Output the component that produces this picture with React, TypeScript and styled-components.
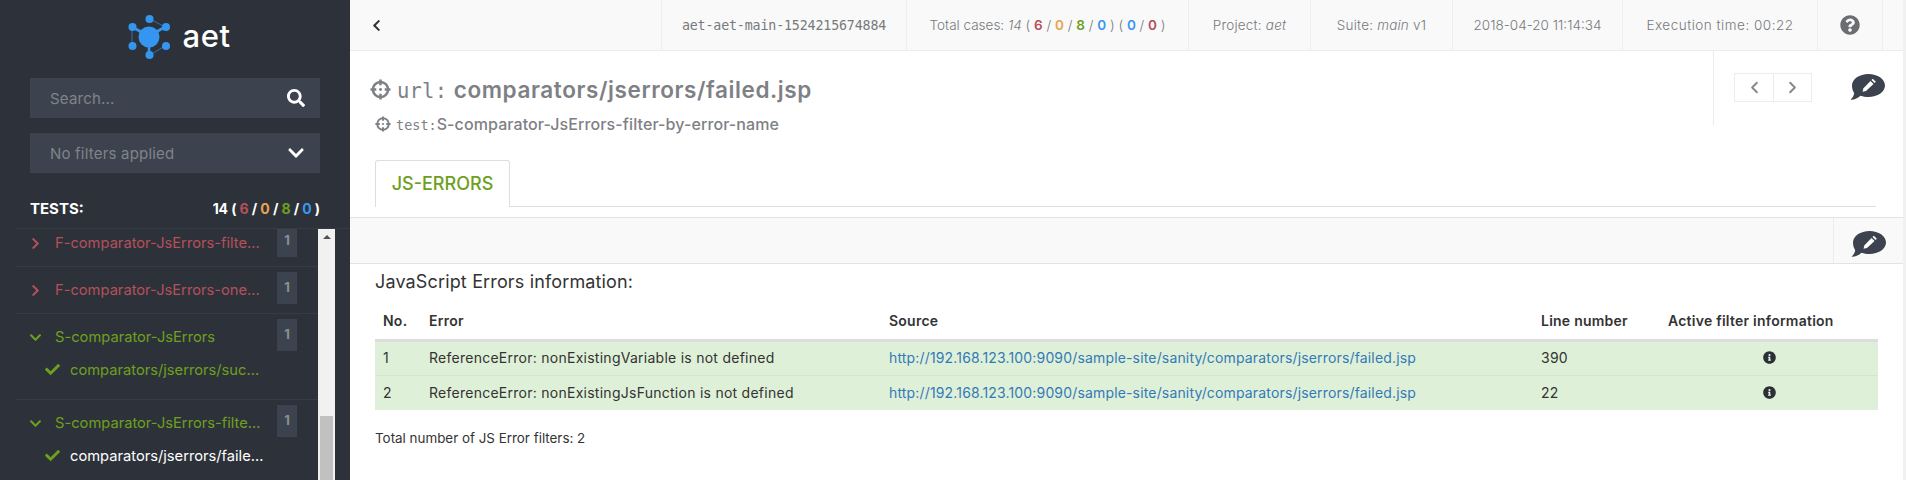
import { FC } from "react";
import styled, { createGlobalStyle } from "styled-components";
import { FaCheck, FaChevronDown, FaChevronLeft, FaChevronRight, FaInfoCircle, FaQuestionCircle, FaSearch } from "react-icons/fa";
import { ChevronLeft, ChevronRight } from "lucide-react";

const RED = "#b5505a";
const ORANGE = "#e8a34f";
const GREEN = "#6da01e";
const BLUE = "#3a97f0";
const SANS = '"Inter", "Open Sans", sans-serif';
const MONO = '"DejaVu Sans Mono", monospace';

const GlobalStyle = createGlobalStyle`
  html, body {
    margin: 0;
    height: 480px;
    overflow: hidden;
    background: #fff;
    font-family: ${SANS};
  }
  * { box-sizing: border-box; }
`;

const Page = styled.div`
  display: flex;
  width: 1906px;
  height: 480px;
  overflow: hidden;
`;

const Sidebar = styled.aside`
  width: 350px;
  flex: none;
  height: 480px;
  background: #2d323a;
  display: flex;
  flex-direction: column;
`;

const Brand = styled.div`
  height: 78px;
  display: flex;
  justify-content: center;
  align-items: flex-start;
  padding: 13px 0 0 8px;
  gap: 11px;
  color: #fff;
  font-size: 31px;
  line-height: 50px;
`;

const BrandName = styled.span`
  font-weight: 500;
  letter-spacing: 0.5px;
  margin-top: -2px;
`;

const Field = styled.div`
  margin: 0 30px 15px;
  height: 40px;
  background: #3d434e;
  display: flex;
  align-items: center;
  justify-content: space-between;
  padding: 0 15px 0 20px;
  color: #7f838a;
  font-size: 15px;
  letter-spacing: 0.2px;
  & svg {
    color: #fff;
    font-size: 18px;
  }
`;

const TestsHead = styled.div`
  margin: 8px 30px 0;
  height: 32px;
  padding-bottom: 8px;
  display: flex;
  align-items: center;
  justify-content: space-between;
  color: #fff;
  font-size: 15px;
  font-weight: 700;
`;

const TestsCount = styled.span`
  font-size: 14px;
  letter-spacing: -0.1px;
`;

const Count = styled.span<{ $color?: string }>`
  color: ${({ $color }) => $color || "inherit"};
`;

const ListArea = styled.div`
  flex: 1;
  min-height: 0;
  margin-left: 15px;
  display: flex;
  border-top: 1px solid #363c45;
  overflow: hidden;
`;

const List = styled.div`
  width: 303px;
  overflow: hidden;
`;

const ListInner = styled.div`
  margin-top: -9px;
`;

const Suite = styled.div`
  border-bottom: 1px solid #363c45;
  padding: 5px 0 0 0;
  min-height: 47px;
`;

const SuiteRow = styled.div<{ $color: string }>`
  display: flex;
  align-items: flex-start;
  color: ${({ $color }) => $color};
  font-size: 14.7px;
`;

const SuiteIcon = styled.span`
  width: 40px;
  padding: 12px 0 0 14px;
  flex: none;
  font-size: 13px;
  line-height: 1;
`;

const SuiteName = styled.span`
  width: 207px;
  line-height: 36px;
  white-space: nowrap;
  overflow: hidden;
  text-overflow: ellipsis;
  flex: none;
`;

const Badge = styled.span`
  margin-left: 15px;
  width: 20px;
  height: 32px;
  flex: none;
  background: #3d434e;
  color: #8b9097;
  font-size: 13px;
  font-weight: 700;
  text-align: center;
  line-height: 31px;
`;

const UrlRow = styled.div<{ $active?: boolean }>`
  display: flex;
  align-items: center;
  height: 30px;
  margin-bottom: 14px;
  color: ${({ $active }) => ($active ? "#fff" : GREEN)};
  font-size: 14.7px;
`;

const UrlIcon = styled.span`
  width: 55px;
  padding-left: 30px;
  flex: none;
  color: ${GREEN};
  font-size: 15px;
  line-height: 1;
`;

const UrlName = styled.span<{ $width: number }>`
  width: ${({ $width }) => $width}px;
  white-space: nowrap;
  overflow: hidden;
  text-overflow: ellipsis;
`;

const ScrollTrack = styled.div`
  width: 17px;
  flex: none;
  background: #f1f1f1;
  display: flex;
  flex-direction: column;
  justify-content: space-between;
  align-items: center;
`;

const ScrollUp = styled.div`
  width: 0;
  height: 0;
  margin-top: 6px;
  border-left: 4px solid transparent;
  border-right: 4px solid transparent;
  border-bottom: 4px solid #505050;
`;

const ScrollThumb = styled.div`
  width: 13px;
  height: 64px;
  background: #c1c1c1;
`;

const Main = styled.main`
  flex: 1;
  min-width: 0;
  height: 480px;
  border-right: 3px solid #f1f1f1;
`;

const Toolbar = styled.header`
  height: 51px;
  display: flex;
  background: #f9f9f9;
  border-bottom: 1px solid #ececec;
  color: #77797d;
  font-size: 13.5px;
  font-weight: 300;
`;

const BackCell = styled.div`
  flex: 1;
  display: flex;
  align-items: center;
  padding-left: 20px;
  color: #333;
  font-size: 13px;
`;

const ToolCell = styled.div<{ $width: number; $spacing?: number }>`
  width: ${({ $width }) => $width}px;
  flex: none;
  border-left: 1px solid #efefef;
  display: flex;
  align-items: center;
  justify-content: center;
  white-space: pre;
  letter-spacing: ${({ $spacing }) => $spacing || 0}px;
`;

const MonoText = styled.span`
  font-family: ${MONO};
  font-size: 13.3px;
  letter-spacing: -0.15px;
`;

const StatNum = styled.span<{ $color: string }>`
  color: ${({ $color }) => $color};
  font-weight: 600;
`;

const HelpIcon = styled(FaQuestionCircle)`
  color: #6b6d70;
  font-size: 20px;
`;

const TitleArea = styled.section`
  height: 114px;
  display: flex;
  justify-content: space-between;
`;

const Titles = styled.div`
  padding: 21px 0 0 20px;
`;

const UrlTitle = styled.h1`
  margin: 0;
  display: flex;
  align-items: center;
  height: 34px;
  gap: 6px;
  color: #7e8085;
  font-size: 22.5px;
  font-weight: 600;
  letter-spacing: 0.6px;
  white-space: pre;
`;

const TitleMono = styled.span`
  display: inline-block;
  margin-right: -6px;
  font-family: ${MONO};
  font-weight: 400;
  font-size: 20.5px;
  letter-spacing: 0.2px;
`;

const TestTitle = styled.div`
  display: flex;
  align-items: center;
  height: 26px;
  margin-top: 5px;
  padding-left: 5px;
  gap: 5px;
  color: #7e8085;
  font-size: 16px;
  font-weight: 500;
  letter-spacing: 0.1px;
  white-space: pre;
`;

const TestMono = styled.span`
  font-family: ${MONO};
  font-weight: 400;
  font-size: 13.5px;
  letter-spacing: 0;
`;

const TitleSide = styled.div`
  width: 190px;
  height: 74px;
  border-left: 1px solid #ececec;
  display: flex;
  align-items: flex-start;
  padding: 22px 0 0 20px;
`;

const NavGroup = styled.div`
  display: flex;
  border: 1px solid #ececec;
  height: 29px;
`;

const NavButton = styled.div`
  width: 38px;
  display: flex;
  align-items: center;
  justify-content: center;
  color: #85878b;
  & + & {
    border-left: 1px solid #ececec;
  }
`;

const SideNote = styled.div`
  margin: 1px 0 0 38px;
  line-height: 0;
`;

const TabStrip = styled.nav`
  margin: -5px 27px 0 25px;
  height: 47px;
  display: flex;
  border-bottom: 1px solid #dedede;
`;

const Tab = styled.div`
  width: 135px;
  height: 47px;
  background: #fff;
  border: 1px solid #dedede;
  border-bottom: 0;
  border-radius: 3px 3px 0 0;
  color: ${GREEN};
  font-size: 18px;
  font-weight: 500;
  text-align: center;
  line-height: 45px;
`;

const ActionBar = styled.div`
  margin-top: 10px;
  height: 47px;
  background: #f9f9f9;
  border-top: 1px solid #e3e3e3;
  border-bottom: 1px solid #e3e3e3;
  display: flex;
  justify-content: flex-end;
`;

const ActionCell = styled.div`
  width: 70px;
  padding-top: 6px;
  border-left: 1px solid #ececec;
  display: flex;
  align-items: center;
  justify-content: center;
`;

const Content = styled.section`
  padding: 5px 25px 0;
`;

const SectionTitle = styled.h2`
  margin: 0;
  height: 26px;
  line-height: 26px;
  color: #333;
  font-size: 18px;
  font-weight: 400;
  letter-spacing: 0.15px;
`;

const ErrorTable = styled.table`
  margin-top: 7px;
  width: 1503px;
  border-collapse: collapse;
  table-layout: fixed;
  color: #333;
  font-size: 14px;
`;

const HeadCell = styled.th`
  height: 38px;
  padding: 0 8px;
  font-weight: 600;
  text-align: left;
  letter-spacing: 0.24px;
  border-bottom: 3px solid #ddd;
`;

const Row = styled.tr`
  background: #dff0d8;
  & + & td {
    border-top: 1px solid #d8e4d2;
  }
`;

const Cell = styled.td<{ $center?: boolean }>`
  height: 35px;
  padding: 0 8px 1px;
  text-align: ${({ $center }) => ($center ? "center" : "left")};
  letter-spacing: 0.26px;
  white-space: nowrap;
`;

const SourceLink = styled.a`
  color: #337ab7;
  text-decoration: none;
  letter-spacing: 0.16px;
`;

const InfoIcon = styled(FaInfoCircle)`
  color: #2b2f36;
  font-size: 13px;
  vertical-align: -1px;
`;

const TotalLine = styled.p`
  margin: 20px 0 0;
  color: #333;
  font-size: 13.4px;
`;

const Logo: FC = () => (
  <svg width="44" height="48" viewBox="0 0 44 48" fill="#3596f2" stroke="#3596f2">
    <path d="M22 6 L37 14 M4 14 V33 M22 42 L37 33" strokeWidth="1" fill="none" stroke="#2f6fb0" />
    <path d="M21 23 L4 14 M21 23 L37 14 M21 23 V42" strokeWidth="2.6" fill="none" />
    <circle cx="21" cy="24" r="10.5" stroke="none" />
    <circle cx="21.5" cy="6" r="4" stroke="none" />
    <circle cx="38" cy="14" r="4" stroke="none" />
    <circle cx="4.5" cy="14" r="4" stroke="none" />
    <circle cx="4.5" cy="33" r="4" stroke="none" />
    <circle cx="38" cy="33" r="4" stroke="none" />
    <circle cx="21.5" cy="42" r="4" stroke="none" />
  </svg>
);

const TargetIcon: FC<{ size: number }> = ({ size }) => (
  <svg width={size} height={size} viewBox="0 0 20 20" fill="none" stroke="#7e8085">
    <circle cx="10" cy="10" r="7.2" strokeWidth="2.4" />
    <path d="M10 0.5 V6 M10 14 V19.5 M0.5 10 H6 M14 10 H19.5" strokeWidth="2.4" />
    <circle cx="10" cy="10" r="1.4" fill="#7e8085" stroke="none" />
  </svg>
);

const NoteIcon: FC = () => (
  <svg width="35" height="26" viewBox="0 0 35 26">
    <path
      d="M18.5 0 C27.5 0 35 5 35 11.5 C35 18 27.5 23 18.5 23 C15.5 23 13 22.6 10.5 21.7 C8 24 4 26 0.5 25.6 C2.5 24 4 21.5 4.2 19 C2.8 17 2 14.5 2 11.5 C2 5 9.5 0 18.5 0 Z"
      fill="#3d434e"
    />
    <path d="M20.5 7 L23.5 10 L16 17 L12.5 17.8 L13.5 14.2 Z" fill="#fff" />
    <path d="M21.5 6 L22.8 4.8 L25.8 7.8 L24.5 9 Z" fill="#fff" />
  </svg>
);

interface ISuite {
  name: string;
  color: string;
  expanded?: boolean;
  url?: { name: string; active?: boolean; width: number };
}

const suites: ISuite[] = [
  { name: "F-comparator-JsErrors-filter-by-error", color: RED },
  { name: "F-comparator-JsErrors-one-error-left", color: RED },
  {
    name: "S-comparator-JsErrors",
    color: GREEN,
    expanded: true,
    url: { name: "comparators/jserrors/success.jsp", width: 190 },
  },
  {
    name: "S-comparator-JsErrors-filter-by-error-name",
    color: GREEN,
    expanded: true,
    url: { name: "comparators/jserrors/failed.jsp", active: true, width: 195 },
  },
];

const errors = [
  { no: 1, text: "ReferenceError: nonExistingVariable is not defined", line: 390 },
  { no: 2, text: "ReferenceError: nonExistingJsFunction is not defined", line: 22 },
];

const SOURCE = "http://192.168.123.100:9090/sample-site/sanity/comparators/jserrors/failed.jsp";

const App: FC = () => (
  <Page>
    <GlobalStyle />
    <Sidebar>
      <Brand>
        <Logo />
        <BrandName>aet</BrandName>
      </Brand>
      <Field>
        Search...
        <FaSearch />
      </Field>
      <Field>
        No filters applied
        <FaChevronDown />
      </Field>
      <TestsHead>
        <span>TESTS:</span>
        <TestsCount>
          14 ( <Count $color={RED}>6</Count> / <Count $color={ORANGE}>0</Count> / <Count $color={GREEN}>8</Count> /{" "}
          <Count $color={BLUE}>0</Count> )
        </TestsCount>
      </TestsHead>
      <ListArea>
        <List>
          <ListInner>
            {suites.map((suite) => (
              <Suite key={suite.name}>
                <SuiteRow $color={suite.color}>
                  <SuiteIcon>{suite.expanded ? <FaChevronDown /> : <FaChevronRight />}</SuiteIcon>
                  <SuiteName>{suite.name}</SuiteName>
                  <Badge>1</Badge>
                </SuiteRow>
                {suite.url && (
                  <UrlRow $active={suite.url.active}>
                    <UrlIcon>
                      <FaCheck />
                    </UrlIcon>
                    <UrlName $width={suite.url.width}>{suite.url.name}</UrlName>
                  </UrlRow>
                )}
              </Suite>
            ))}
          </ListInner>
        </List>
        <ScrollTrack>
          <ScrollUp />
          <ScrollThumb />
        </ScrollTrack>
      </ListArea>
    </Sidebar>
    <Main>
      <Toolbar>
        <BackCell>
          <FaChevronLeft />
        </BackCell>
        <ToolCell $width={245}>
          <MonoText>aet-aet-main-1524215674884</MonoText>
        </ToolCell>
        <ToolCell $width={282}>
          Total cases: <em>14</em> ( <StatNum $color={RED}>6</StatNum> / <StatNum $color={ORANGE}>0</StatNum> /{" "}
          <StatNum $color={GREEN}>8</StatNum> / <StatNum $color={BLUE}>0</StatNum> ) ({" "}
          <StatNum $color={BLUE}>0</StatNum> / <StatNum $color={RED}>0</StatNum> )
        </ToolCell>
        <ToolCell $width={122} $spacing={0.2}>
          Project: <em>aet</em>
        </ToolCell>
        <ToolCell $width={142} $spacing={0.2}>
          Suite: <em>main</em> v1
        </ToolCell>
        <ToolCell $width={170}>2018-04-20 11:14:34</ToolCell>
        <ToolCell $width={195} $spacing={0.5}>
          Execution time: 00:22
        </ToolCell>
        <ToolCell $width={65}>
          <HelpIcon />
        </ToolCell>
        <ToolCell $width={21} />
      </Toolbar>
      <TitleArea>
        <Titles>
          <UrlTitle>
            <TargetIcon size={21} />
            <span>
              <TitleMono>url: </TitleMono>comparators/jserrors/failed.jsp
            </span>
          </UrlTitle>
          <TestTitle>
            <TargetIcon size={16} />
            <span>
              <TestMono>test:</TestMono>S-comparator-JsErrors-filter-by-error-name
            </span>
          </TestTitle>
        </Titles>
        <TitleSide>
          <NavGroup>
            <NavButton>
              <ChevronLeft size={19} strokeWidth={2.4} />
            </NavButton>
            <NavButton>
              <ChevronRight size={19} strokeWidth={2.4} />
            </NavButton>
          </NavGroup>
          <SideNote>
            <NoteIcon />
          </SideNote>
        </TitleSide>
      </TitleArea>
      <TabStrip>
        <Tab>JS-ERRORS</Tab>
      </TabStrip>
      <ActionBar>
        <ActionCell>
          <NoteIcon />
        </ActionCell>
      </ActionBar>
      <Content>
        <SectionTitle>JavaScript Errors information:</SectionTitle>
        <ErrorTable>
          <colgroup>
            <col width="46" />
            <col width="460" />
            <col width="652" />
            <col width="127" />
            <col width="218" />
          </colgroup>
          <thead>
            <tr>
              <HeadCell>No.</HeadCell>
              <HeadCell>Error</HeadCell>
              <HeadCell>Source</HeadCell>
              <HeadCell>Line number</HeadCell>
              <HeadCell>Active filter information</HeadCell>
            </tr>
          </thead>
          <tbody>
            {errors.map((error) => (
              <Row key={error.no}>
                <Cell>{error.no}</Cell>
                <Cell>{error.text}</Cell>
                <Cell>
                  <SourceLink href="#">{SOURCE}</SourceLink>
                </Cell>
                <Cell>{error.line}</Cell>
                <Cell $center>
                  <InfoIcon />
                </Cell>
              </Row>
            ))}
          </tbody>
        </ErrorTable>
        <TotalLine>Total number of JS Error filters: 2</TotalLine>
      </Content>
    </Main>
  </Page>
);

export default App;
